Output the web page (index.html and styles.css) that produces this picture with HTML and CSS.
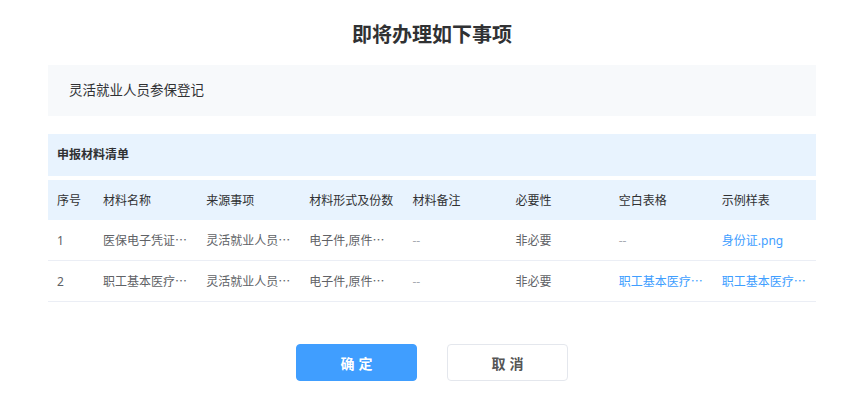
FILE: index.html
```html
<!DOCTYPE html>
<html lang="zh-CN">
<head>
    <meta charset="UTF-8">
    <meta name="viewport" content="width=device-width, initial-scale=1.0">
    <title>即将办理如下事项</title>
    <link rel="stylesheet" href="styles.css">
</head>
<body>
    <div class="dialog">
        <h1 class="title">即将办理如下事项</h1>

        <div class="matter">灵活就业人员参保登记</div>

        <div class="section-head">申报材料清单</div>

        <table class="materials">
            <colgroup>
                <col class="col-no">
                <col><col><col><col><col><col><col>
            </colgroup>
            <thead>
                <tr>
                    <th>序号</th>
                    <th>材料名称</th>
                    <th>来源事项</th>
                    <th>材料形式及份数</th>
                    <th>材料备注</th>
                    <th>必要性</th>
                    <th>空白表格</th>
                    <th>示例样表</th>
                </tr>
            </thead>
            <tbody>
                <!-- long values are shortened to fit the column, full text in title -->
                <tr>
                    <td>1</td>
                    <td title="医保电子凭证激活截图">医保电子凭证⋯</td>
                    <td title="灵活就业人员参保登记">灵活就业人员⋯</td>
                    <td title="电子件,原件1份,复印件1份">电子件,原件⋯</td>
                    <td class="muted">--</td>
                    <td>非必要</td>
                    <td class="muted">--</td>
                    <td><a href="#" class="link">身份证.png</a></td>
                </tr>
                <tr>
                    <td>2</td>
                    <td title="职工基本医疗保险参保登记表">职工基本医疗⋯</td>
                    <td title="灵活就业人员参保登记">灵活就业人员⋯</td>
                    <td title="电子件,原件1份,复印件1份">电子件,原件⋯</td>
                    <td class="muted">--</td>
                    <td>非必要</td>
                    <td><a href="#" class="link" title="职工基本医疗保险参保登记表.docx">职工基本医疗⋯</a></td>
                    <td><a href="#" class="link" title="职工基本医疗保险参保登记表样表.png">职工基本医疗⋯</a></td>
                </tr>
            </tbody>
        </table>

        <div class="actions">
            <button class="btn btn-primary">确定</button>
            <button class="btn btn-default">取消</button>
        </div>
    </div>
</body>
</html>
```

FILE: styles.css
```css
:root {
    --primary: #409EFF;
    --text-main: #303133;
    --text-regular: #606266;
    --text-muted: #a8abb2;
    --head-bg: #e8f3fe;
    --matter-bg: #f7f9fb;
    --border-color: #ebeef5;
}

body {
    margin: 0;
    background: #ffffff;
    font-family: "Noto Sans", "Noto Sans CJK SC", sans-serif;
    color: var(--text-main);
}

.dialog {
    padding: 0 49px 0 48px;
}

.title {
    margin: 21px 0 16px 0;
    font-size: 20px;
    line-height: 28px;
    font-weight: bold;
    text-align: center;
    color: #303133;
}

.matter {
    background: var(--matter-bg);
    height: 51px;
    line-height: 51px;
    padding-left: 21px;
    font-size: 13.5px;
    color: var(--text-main);
}

.section-head {
    margin-top: 18px;
    background: var(--head-bg);
    height: 42px;
    line-height: 42px;
    padding-left: 9px;
    font-size: 12px;
    font-weight: bold;
    color: var(--text-main);
}

.materials {
    margin-top: 4px;
    width: 100%;
    border-collapse: collapse;
    table-layout: fixed;
    font-size: 12px;
}

.materials .col-no {
    width: 46px;
}

.materials th,
.materials td {
    padding: 0 4px 0 9px;
    text-align: left;
    white-space: nowrap;
}

.materials th {
    height: 40px;
    background: var(--head-bg);
    font-weight: normal;
    color: var(--text-main);
}

.materials td {
    height: 40px;
    color: var(--text-regular);
    border-bottom: 1px solid var(--border-color);
}

.materials td.muted {
    color: var(--text-muted);
}

.link {
    color: var(--primary);
    text-decoration: none;
}

.actions {
    display: flex;
    justify-content: center;
    gap: 30px;
    margin-top: 42px;
}

.btn {
    width: 121px;
    height: 37px;
    border-radius: 4px;
    font-family: inherit;
    font-size: 14px;
    letter-spacing: 4px;
    text-indent: 4px;
    cursor: pointer;
}

.btn-primary {
    background: var(--primary);
    border: 1px solid var(--primary);
    color: #ffffff;
    font-weight: bold;
}

.btn-default {
    background: #ffffff;
    border: 1px solid #e4e7ed;
    color: #555555;
    font-weight: bold;
}
```
